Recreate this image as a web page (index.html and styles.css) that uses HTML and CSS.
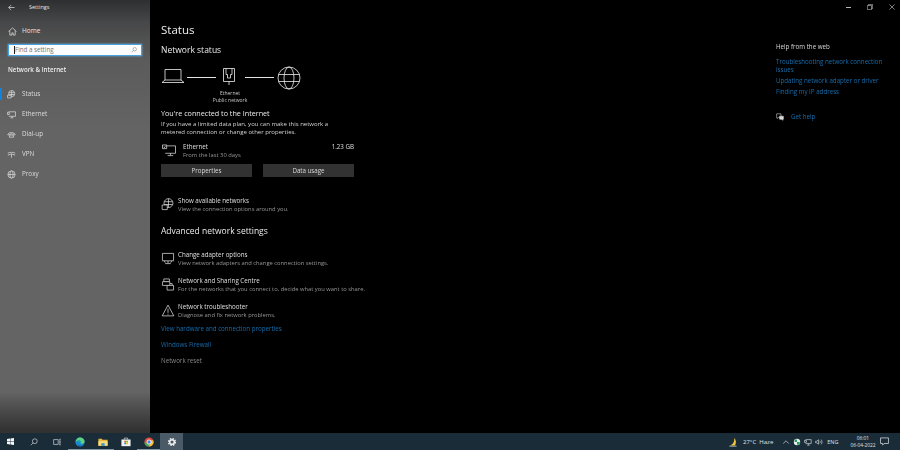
FILE: index.html
```html
<!DOCTYPE html>
<html lang="en">
<head>
  <meta charset="UTF-8">
  <meta name="viewport" content="width=device-width, initial-scale=1">
  <title>Settings - Status</title>
  <link rel="stylesheet" href="styles.css">
</head>
<body>

<div class="window">
  <aside class="sidebar">
    <div class="titlebar">
      <svg class="back" viewBox="0 0 8 8"><path d="M7.500 4H.8M3.600 1.200.8 4l2.800 2.800"/></svg>
      <span>Settings</span>
    </div>
    <div class="home">
      <svg class="side-icon" viewBox="0 0 10 10"><path d="M.6 5 5 1l4.400 4M2 4v5h2.300V6.500h1.400V9H8V4"/></svg>
      <span>Home</span>
    </div>
    <div class="search">
      <span class="caret"></span>
      <span class="search-text">Find a setting</span>
      <svg class="search-icon" viewBox="0 0 8 8"><circle cx="5" cy="3" r="2.300"/><path d="M3.300 4.700.8 7.200"/></svg>
    </div>
    <div class="side-title">Network &amp; Internet</div>
    <ul class="nav">
      <li class="active">
        <svg class="side-icon" viewBox="0 0 10 10"><circle cx="5.200" cy="4" r="3.400"/><path d="M2 3h6.400M2 5h6.400M5.200.6v6.800"/><path class="cover-grey" d="M.6 5.800h4v3h-4z"/></svg>
        <span>Status</span>
      </li>
      <li>
        <svg class="side-icon" viewBox="0 0 10 10"><path d="M2 2h7.500v5H2M5.500 7v1.500M4 8.700h3M.5 2.500h2v2.500h-2z"/></svg>
        <span>Ethernet</span>
      </li>
      <li>
        <svg class="side-icon" viewBox="0 0 10 10"><path d="M1 4.500c2-2.400 6-2.400 8 0v1H7V4.300H3v1.200H1zM3.500 5.500h3l1 2.500h-5z"/></svg>
        <span>Dial-up</span>
      </li>
      <li>
        <svg class="side-icon" viewBox="0 0 10 10"><path d="M.8 3.500c2.500-1.200 5.900-1.200 8.400 0M2.200 5.200c1.700-.8 3.900-.8 5.600 0M5 4v4.500M1 5.500h1.500M7.500 5.500H9"/></svg>
        <span>VPN</span>
      </li>
      <li>
        <svg class="side-icon" viewBox="0 0 10 10"><circle cx="5" cy="5" r="4"/><ellipse cx="5" cy="5" rx="1.800" ry="4"/><path d="M1 5h8"/></svg>
        <span>Proxy</span>
      </li>
    </ul>
  </aside>

  <main class="content">
    <h1>Status</h1>
    <h2>Network status</h2>

    <div class="diagram">
      <svg class="laptop" viewBox="0 0 24 16"><path d="M4 1.500h16v10.500H4zM4 12 1 14.500h22L20 12"/></svg>
      <span class="wire"></span>
      <div class="adapter">
        <svg viewBox="0 0 12 18"><path d="M.5.500h11v13H.5zM3 .5v6h1.500v3.500h3V6.500H9V.5M6 13.500V17"/></svg>
      </div>
      <span class="wire"></span>
      <svg class="globe" viewBox="0 0 24 24"><circle cx="12" cy="12" r="11"/><ellipse cx="12" cy="12" rx="5" ry="11"/><path d="M1.500 8.500h21M1.500 15.500h21"/></svg>
    </div>
    <div class="diagram-label">Ethernet<br>Public network</div>

    <h3>You're connected to the Internet</h3>
    <p class="intro">If you have a limited data plan, you can make this network a metered connection or change other properties.</p>

    <div class="usage">
      <svg class="row-icon" viewBox="0 0 16 14"><path d="M4 2h11v8H4M9.500 10v2M6.500 12.500h6"/><path class="cover" d="M1 1h4.500v4H1z"/><path d="M2 3l1 1 1.500-2"/></svg>
      <div class="usage-text">
        <div class="row-head"><span>Ethernet</span><span>1.23 GB</span></div>
        <div class="muted">From the last 30 days</div>
      </div>
    </div>

    <div class="buttons">
      <button type="button">Properties</button>
      <button type="button">Data usage</button>
    </div>

    <div class="row row-available">
      <svg class="row-icon" viewBox="0 0 14 14"><circle cx="7.500" cy="5.500" r="4.800"/><path d="M3 4h9M3 7h9M7.500.7v9.600"/><path class="cover" d="M.7 7.500h5.500v5H.7z"/></svg>
      <div>
        <div>Show available networks</div>
        <div class="muted">View the connection options around you.</div>
      </div>
    </div>

    <h2 class="advanced">Advanced network settings</h2>

    <div class="row">
      <svg class="row-icon" viewBox="0 0 14 14"><path d="M1 1.500h12v8H1zM7 9.500v2.500M4 12.500h6M3 9.500l1 2M11 9.500l-1 2"/></svg>
      <div>
        <div>Change adapter options</div>
        <div class="muted">View network adapters and change connection settings.</div>
      </div>
    </div>
    <div class="row">
      <svg class="row-icon" viewBox="0 0 14 14"><path d="M2.500 1h6v3h-6z"/><path class="cover" d="M1 4h8v4H1z"/><path class="cover" d="M6 8h7v5H6z"/><path d="M9 6h2.500v2"/></svg>
      <div>
        <div>Network and Sharing Centre</div>
        <div class="muted">For the networks that you connect to, decide what you want to share.</div>
      </div>
    </div>
    <div class="row">
      <svg class="row-icon" viewBox="0 0 14 14"><path d="M7 1.200 13.300 12.800H.7zM7 5v4.500M7 10.500v1"/></svg>
      <div>
        <div>Network troubleshooter</div>
        <div class="muted">Diagnose and fix network problems.</div>
      </div>
    </div>

    <a class="link link-first">View hardware and connection properties</a>
    <a class="link">Windows Firewall</a>
    <a class="link link-grey">Network reset</a>
  </main>

  <aside class="help">
    <div class="controls">
      <span class="minimize"></span>
      <svg viewBox="0 0 8 8"><path d="M.5 2h5.500v5.500H.5zM2 2V.5h5.500V6H6"/></svg>
      <svg viewBox="0 0 8 8"><path d="M.5.500l7 7M7.500.5l-7 7"/></svg>
    </div>
    <div class="help-title">Help from the web</div>
    <a class="link">Troubleshooting network connection issues</a>
    <a class="link">Updating network adapter or driver</a>
    <a class="link">Finding my IP address</a>
    <div class="get-help">
      <svg viewBox="0 0 10 10"><path d="M.8 1h5.400v4.500H3L1.500 7V5.500H.8z"/><path class="fill" d="M4.500 4h4.700v3.800h-.8v1.400L7 7.800H4.500z"/></svg>
      <a class="link">Get help</a>
    </div>
  </aside>
</div>

<footer class="taskbar">
  <div class="task-left">
    <span class="task-btn">
      <svg class="start" viewBox="0 0 10 10"><path class="white" d="M0 1.300 4.300.7v4H0zM4.900.6 10 0v4.700H4.900zM0 5.300h4.300v4L0 8.700zM4.900 5.300H10V10l-5.100-.7z"/></svg>
    </span>
    <span class="task-btn">
      <svg class="small" viewBox="0 0 10 10"><circle cx="6" cy="4" r="3" class="line"/><path class="line" d="M3.800 6.200 1 9"/></svg>
    </span>
    <span class="task-btn">
      <svg class="small" viewBox="0 0 10 10"><path class="line" d="M.8 2h5.700v6H.8zM8 1.500h1.500M8 5h1.500M8 8.500h1.500M8.700 1.500v7"/></svg>
    </span>
    <span class="task-btn running">
      <svg viewBox="0 0 12 12"><circle cx="6" cy="6" r="5.500" fill="#1a8fd0"/><path fill="#5fd37a" d="M.6 6C1 2.500 3.500.5 6 .5c3 0 5.500 2 5.500 5.200 0 1.600-1.500 2.300-3 2.300-1.200 0-2-.4-2-1 0-.4.500-.4.500-1.200C7 4.600 6 4 5 4 3 4 1.500 5 .6 6z"/><path fill="#0d5a9c" d="M6 11.500C3.500 11 2.500 8.500 3.500 6.500 3 9 5 10.500 7.500 10.500c1.500 0 2.800-.6 3.500-1.700-1 1.800-3 2.900-5 2.700z"/></svg>
    </span>
    <span class="task-btn running">
      <svg viewBox="0 0 12 12"><path fill="#e8b93a" d="M.5 2h4l1 1.300h6V10.500H.5z"/><path fill="#f7dc7a" d="M.5 5h11v5.500H.5z"/><path fill="#3a8fd0" d="M4 7.500h4V10.500H4z"/></svg>
    </span>
    <span class="task-btn">
      <svg viewBox="0 0 12 12"><path fill="#f1f1f1" d="M.5 3h11v8H.5z"/><path class="line" d="M4 3V1.300h4V3"/><path fill="#e8542a" d="M4 4.500h2v2H4z"/><path fill="#7fba00" d="M6.300 4.500h2v2h-2z"/><path fill="#1f8fe0" d="M4 6.800h2v2H4z"/><path fill="#f5b800" d="M6.300 6.800h2v2h-2z"/></svg>
    </span>
    <span class="task-btn running">
      <svg viewBox="0 0 12 12"><circle cx="6" cy="6" r="5.500" fill="#dd4b3c"/><path fill="#4aa853" d="M.5 6a5.500 5.500 0 0 0 5 5.500L8 7.500H4z"/><path fill="#fbc02d" d="M11.500 6c0 3-2.500 5.500-6 5.500L8 7.500 8 4h3z"/><circle cx="6" cy="6" r="2.500" fill="#4285f4" stroke="#fff"/></svg>
    </span>
    <span class="task-btn focused">
      <svg viewBox="0 0 12 12"><circle class="gear-teeth" cx="6" cy="6" r="4.200"/><circle class="gear" cx="6" cy="6" r="2.800"/></svg>
    </span>
  </div>
  <div class="tray">
    <svg class="weather" viewBox="0 0 12 12"><path fill="#f2c53d" d="M7 .5C9.500 3 10 7 8 10.500H1.500C5 9.500 7.500 5.500 7 .5z"/><path fill="#cfd4d8" d="M.5 11h9.500v1H.5z"/></svg>
    <span class="weather-text">27°C&nbsp; Haze</span>
    <svg class="tray-icon" viewBox="0 0 10 10"><path class="line" d="M1.500 7 5 3.500 8.500 7"/></svg>
    <svg class="tray-icon" viewBox="0 0 10 10"><circle cx="5" cy="5" r="4" fill="#e8eef2"/><path fill="#2f9e5b" d="M2 2h3v3H2zM5 5h3.500v3.500H5z"/></svg>
    <svg class="tray-icon" viewBox="0 0 10 10"><path class="line" d="M2 2h7v5H2M5.500 7v1.500M4 9h3M.5 3h2.500v2.500H.5z"/></svg>
    <svg class="tray-icon" viewBox="0 0 10 10"><path class="line" d="M.8 4h1.500l2-1.800v5.600l-2-1.800H.8zM6 3.500c.7 1 .7 2 0 3M7.700 2c1.400 2 1.400 4 0 6"/></svg>
    <span class="lang">ENG</span>
    <div class="clock">06:01<br>06-04-2022</div>
    <svg class="notify" viewBox="0 0 10 10"><path class="line" d="M.6 1h8.800v6.200H4.500L3 9V7.200H.6z"/></svg>
  </div>
</footer>

</body>
</html>
```

FILE: styles.css
```css
* {
  box-sizing: border-box;
}
html, body {
  margin: 0;
  height: 100%;
}
body {
  width: 900px;
  height: 450px;
  overflow: hidden;
  display: flex;
  flex-direction: column;
  background: #000;
  color: #e0e0e0;
  font-family: "Open Sans", "Noto Sans", sans-serif;
  font-size: 6.200px;
  line-height: 8px;
}
svg {
  fill: none;
  stroke: currentColor;
  stroke-width: 1;
  display: block;
}
h1, h2, h3, p, ul {
  margin: 0;
  padding: 0;
  font-weight: 400;
}
.window {
  flex: 1;
  display: flex;
  min-height: 0;
  opacity: .99;
}
.cover {
  fill: #000;
}
.cover-grey {
  fill: #626262;
}

/* left pane */
.sidebar {
  width: 150px;
  flex: none;
  background: linear-gradient(#2e3031 0, #474849 22px, #5d5d5d 60px, #666 130px, #666 392px, #4c4c4c 410px, #333 430px);
  color: #e8e8e8;
}
.titlebar {
  height: 14px;
  display: flex;
  align-items: center;
  padding-left: 8px;
  font-size: 5.500px;
}
.back {
  width: 7px;
  height: 7px;
  margin-right: 14px;
  stroke-width: .8;
}
.home {
  display: flex;
  align-items: center;
  height: 12px;
  margin-top: 11px;
  padding-left: 8px;
  font-size: 6.500px;
}
.side-icon {
  width: 9px;
  height: 9px;
  margin-right: 5px;
  flex: none;
  stroke-width: .8;
}
.search {
  display: flex;
  align-items: center;
  width: 134px;
  height: 12px;
  margin: 7px 0 0 8px;
  padding: 0 4px 0 5px;
  background: #fff;
  border: 1px solid #4aa3e0;
  box-shadow: 0 0 2px #6cb8ea;
  color: #777;
  font-size: 6.200px;
}
.caret {
  width: 1px;
  height: 8px;
  background: #222;
}
.search-text {
  flex: 1;
}
.search-icon {
  width: 6px;
  height: 6px;
  stroke-width: .7;
}
.side-title {
  margin-top: 10px;
  padding-left: 8px;
  font-size: 6.200px;
  font-weight: 600;
  color: #f0f0f0;
}
.nav {
  list-style: none;
  margin-top: 10px;
}
.nav li {
  display: flex;
  align-items: center;
  height: 20px;
  padding-left: 7px;
  font-size: 6.300px;
  color: #dedede;
  position: relative;
}
.nav .side-icon {
  margin-right: 6px;
}
.nav li.active::before {
  content: "";
  position: absolute;
  left: 0;
  top: 4px;
  width: 2px;
  height: 12px;
  background: #1584dc;
}

/* middle column */
.content {
  width: 240px;
  padding: 22px 0 0 11px;
  flex: none;
}
h1 {
  font-size: 11.500px;
  line-height: 15px;
  color: #f2f2f2;
}
h2 {
  margin-top: 7px;
  font-size: 8.500px;
  line-height: 11px;
  color: #efefef;
}
.diagram {
  display: flex;
  align-items: flex-start;
  margin-top: 12px;
  color: #f4f4f4;
}
.laptop {
  width: 24px;
  height: 16px;
  margin-top: 1px;
  stroke-width: .8;
}
.wire {
  width: 29px;
  height: 1px;
  margin: 10px 3px 0 2px;
  background: #e8e8e8;
}
.adapter svg {
  width: 12px;
  height: 18px;
  margin: 1px 8px 0 4px;
  stroke-width: .8;
}
.globe {
  width: 24px;
  height: 24px;
  stroke-width: .8;
  margin-top: -1px;
}
.diagram-label {
  width: 138px;
  text-align: center;
  font-size: 5px;
  line-height: 7px;
  margin-top: 0;
  color: #ccc;
}
h3 {
  margin-top: 4px;
  font-size: 7.200px;
  line-height: 10px;
  color: #eee;
}
.intro {
  width: 180px;
  margin-top: 2px;
  font-size: 6px;
  color: #d8d8d8;
}
.usage {
  display: flex;
  margin-top: 7px;
  width: 193px;
}
.row-icon {
  width: 14px;
  height: 13px;
  flex: none;
  margin: 1px 3px 0 0;
  stroke-width: .8;
}
.usage .row-icon {
  width: 16px;
  margin-right: 6px;
}
.usage-text {
  flex: 1;
}
.row-head {
  display: flex;
  justify-content: space-between;
}
.muted {
  color: #9a9a9a;
  font-size: 5.800px;
}
.buttons {
  display: flex;
  gap: 11px;
  margin-top: 5px;
}
button {
  width: 91px;
  height: 13px;
  padding: 0;
  border: none;
  background: #333;
  color: #dcdcdc;
  font: inherit;
}
.row {
  display: flex;
  margin-top: 10px;
}
.row-available {
  margin-top: 20px;
}
.advanced {
  margin-top: 12px;
  margin-bottom: 15px;
}
.link {
  display: block;
  color: #1a6fb0;
  font-size: 6.200px;
}
.link-first {
  margin-top: 6px;
}
.content .link + .link {
  margin-top: 8px;
}
.content .link-grey {
  color: #8a8a8a;
}

/* right column */
.help {
  flex: 1;
  position: relative;
  padding: 43px 0 0 386px;
}
.controls {
  position: absolute;
  top: 4px;
  right: 10px;
  display: flex;
  align-items: center;
  gap: 16px;
  color: #cfcfcf;
}
.controls svg {
  width: 6px;
  height: 6px;
  stroke-width: .8;
}
.minimize {
  width: 5px;
  height: 1px;
  background: #bbb;
}
.help-title {
  margin-bottom: 7px;
  color: #ddd;
}
.help .link {
  width: 114px;
  margin-bottom: 3px;
}
.get-help {
  display: flex;
  align-items: center;
  margin-top: 17px;
  color: #ddd;
}
.get-help svg {
  width: 8px;
  height: 8px;
  margin-right: 7px;
  stroke-width: .7;
}
.get-help .fill {
  fill: currentColor;
}
.get-help .link {
  margin: 0;
}

/* taskbar */
.taskbar {
  height: 17px;
  flex: none;
  display: flex;
  justify-content: space-between;
  background: #1b2c39;
  color: #dfe5e9;
}
.task-left {
  display: flex;
  margin-left: -1px;
}
.task-btn {
  width: 23px;
  height: 17px;
  display: flex;
  align-items: center;
  justify-content: center;
}
.task-btn svg {
  width: 10px;
  height: 10px;
  stroke: none;
}
.task-btn .start {
  width: 7px;
  height: 7px;
}
.task-btn .small {
  width: 8px;
  height: 8px;
}
.white {
  fill: #f4f6f8;
}
svg .line, .tray-icon .line, .notify .line {
  fill: none;
  stroke: currentColor;
  stroke-width: .8;
}
.running {
  box-shadow: inset 0 -1px 0 #7f97a8;
}
.focused {
  background: #4a5b67;
}
.task-btn .gear {
  fill: none;
  stroke: #f2f2f2;
  stroke-width: 1.800;
}
.task-btn .gear-teeth {
  fill: none;
  stroke: #f2f2f2;
  stroke-width: 1.400;
  stroke-dasharray: 1.900 1.400;
}
.tray {
  display: flex;
  align-items: center;
  font-size: 6px;
  padding-right: 11.500px;
}
.weather {
  width: 9px;
  height: 10px;
  stroke: none;
  margin-right: 5px;
}
.weather-text {
  margin-right: 9px;
}
.tray-icon {
  width: 8px;
  height: 8px;
  margin-right: 3px;
  stroke: none;
}
.lang {
  margin: 0 12px 0 1px;
  font-size: 5.500px;
}
.clock {
  text-align: center;
  font-size: 4.800px;
  line-height: 7px;
  margin-right: 4px;
}
.notify {
  width: 9px;
  height: 9px;
  stroke: none;
}
```
